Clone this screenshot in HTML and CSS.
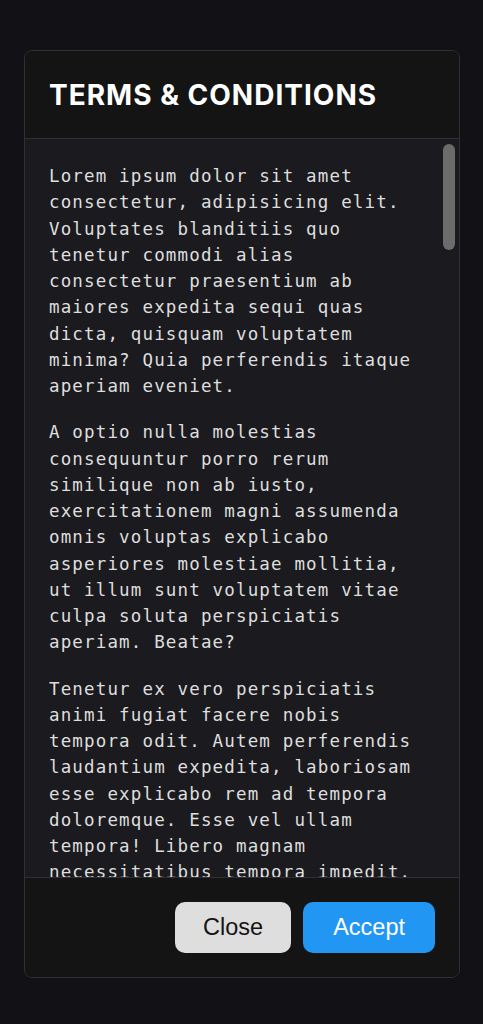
FILE: index.html
```html
<!DOCTYPE html>
<html lang="en">
<head>
<meta charset="utf-8">
<title>Terms &amp; Conditions</title>
<link rel="stylesheet" href="styles.css">
</head>
<body>
<div class="page">
  <section class="dialog">
    <header class="dialog-header">
      <h1 class="dialog-title">TERMS &amp; CONDITIONS</h1>
    </header>
    <div class="dialog-main">
      <div class="dialog-body">
        <p>Lorem ipsum dolor sit amet consectetur, adipisicing elit. Voluptates blanditiis quo tenetur commodi alias consectetur praesentium ab maiores expedita sequi quas dicta, quisquam voluptatem minima? Quia perferendis itaque aperiam eveniet.</p>
        <p>A optio nulla molestias consequuntur porro rerum similique non ab iusto, exercitationem magni assumenda omnis voluptas explicabo asperiores molestiae mollitia, ut illum sunt voluptatem vitae culpa soluta perspiciatis aperiam. Beatae?</p>
        <p>Tenetur ex vero perspiciatis animi fugiat facere nobis tempora odit. Autem perferendis laudantium expedita, laboriosam esse explicabo rem ad tempora doloremque. Esse vel ullam tempora! Libero magnam necessitatibus tempora impedit.</p>
        <p>Lorem ipsum dolor sit amet consectetur, adipisicing elit. Voluptates blanditiis quo tenetur commodi alias consectetur praesentium ab maiores expedita sequi quas dicta, quisquam voluptatem minima? Quia perferendis itaque aperiam eveniet.</p>
        <p>A optio nulla molestias consequuntur porro rerum similique non ab iusto, exercitationem magni assumenda omnis voluptas explicabo asperiores molestiae mollitia, ut illum sunt voluptatem vitae culpa soluta perspiciatis aperiam. Beatae?</p>
        <p>Tenetur ex vero perspiciatis animi fugiat facere nobis tempora odit. Autem perferendis laudantium expedita, laboriosam esse explicabo rem ad tempora doloremque. Esse vel ullam tempora! Libero magnam necessitatibus tempora impedit.</p>
        <p>Lorem ipsum dolor sit amet consectetur, adipisicing elit. Voluptates blanditiis quo tenetur commodi alias consectetur praesentium ab maiores expedita sequi quas dicta, quisquam voluptatem minima? Quia perferendis itaque aperiam eveniet.</p>
        <p>A optio nulla molestias consequuntur porro rerum similique non ab iusto, exercitationem magni assumenda omnis voluptas explicabo asperiores molestiae mollitia, ut illum sunt voluptatem vitae culpa soluta perspiciatis aperiam. Beatae?</p>
        <p>Tenetur ex vero perspiciatis animi fugiat facere nobis tempora odit. Autem perferendis laudantium expedita, laboriosam esse explicabo rem ad tempora doloremque. Esse vel ullam tempora! Libero magnam necessitatibus tempora impedit.</p>
        <p>Lorem ipsum dolor sit amet consectetur, adipisicing elit. Voluptates blanditiis quo tenetur commodi alias consectetur praesentium ab maiores expedita sequi quas dicta, quisquam voluptatem minima? Quia perferendis itaque aperiam eveniet.</p>
        <p>A optio nulla molestias consequuntur porro rerum similique non ab iusto, exercitationem magni assumenda omnis voluptas explicabo asperiores molestiae mollitia, ut illum sunt voluptatem vitae culpa soluta perspiciatis aperiam. Beatae?</p>
        <p>Tenetur ex vero perspiciatis animi fugiat facere nobis tempora odit. Autem perferendis laudantium expedita, laboriosam esse explicabo rem ad tempora doloremque. Esse vel ullam tempora! Libero magnam necessitatibus tempora impedit.</p>
        <p>Lorem ipsum dolor sit amet consectetur, adipisicing elit. Voluptates blanditiis quo tenetur commodi alias consectetur praesentium ab maiores expedita sequi quas dicta, quisquam voluptatem minima? Quia perferendis itaque aperiam eveniet.</p>
        <p>A optio nulla molestias consequuntur porro rerum similique non ab iusto, exercitationem magni assumenda omnis voluptas explicabo asperiores molestiae mollitia, ut illum sunt voluptatem vitae culpa soluta perspiciatis aperiam. Beatae?</p>
        <p>Tenetur ex vero perspiciatis animi fugiat facere nobis tempora odit. Autem perferendis laudantium expedita, laboriosam esse explicabo rem ad tempora doloremque. Esse vel ullam tempora! Libero magnam necessitatibus tempora impedit.</p>
        <p>Lorem ipsum dolor sit amet consectetur, adipisicing elit. Voluptates blanditiis quo tenetur commodi alias consectetur praesentium ab maiores expedita sequi quas dicta, quisquam voluptatem minima? Quia perferendis itaque aperiam eveniet.</p>
        <p>A optio nulla molestias consequuntur porro rerum similique non ab iusto, exercitationem magni assumenda omnis voluptas explicabo asperiores molestiae mollitia, ut illum sunt voluptatem vitae culpa soluta perspiciatis aperiam. Beatae?</p>
        <p>Tenetur ex vero perspiciatis animi fugiat facere nobis tempora odit. Autem perferendis laudantium expedita, laboriosam esse explicabo rem ad tempora doloremque. Esse vel ullam tempora! Libero magnam necessitatibus tempora impedit.</p>
      </div>
      <div class="scroll-thumb" aria-hidden="true"></div>
    </div>
    <footer class="dialog-footer">
      <button class="btn btn-close" type="button">Close</button>
      <button class="btn btn-accept" type="button">Accept</button>
    </footer>
  </section>
</div>
</body>
</html>
```

FILE: styles.css
```css
* {
  box-sizing: border-box;
}

html, body {
  margin: 0;
  padding: 0;
  background: #111116;
}

.page {
  padding: 50px 23px 46px 24px;
}

.dialog {
  display: flex;
  flex-direction: column;
  height: 928px;
  border: 1px solid #303034;
  border-radius: 8px;
  background: #141414;
  overflow: hidden;
}

.dialog-header {
  height: 88px;
  padding: 0 24px;
  display: flex;
  align-items: center;
  border-bottom: 1px solid #303034;
  background: #141414;
  flex: none;
}

.dialog-title {
  margin: 0;
  font-family: Inter, "Liberation Sans", sans-serif;
  font-weight: 700;
  font-size: 28px;
  letter-spacing: 1px;
  line-height: 1;
  color: #ffffff;
}

.dialog-main {
  position: relative;
  flex: 1;
  min-height: 0;
  display: flex;
  background: #1b1b1f;
}

.dialog-body {
  flex: 1;
  min-height: 0;
  overflow-y: auto;
  scrollbar-width: none;
  padding: 24px 44px 24px 24px;
  font-family: "DejaVu Sans Mono", "Liberation Mono", monospace;
  font-size: 17.5px;
  letter-spacing: 1.15px;
  line-height: 26.25px;
  color: #dedede;
}

.dialog-body p {
  margin: 0 0 20px;
}

.dialog-body p:last-child {
  margin-bottom: 0;
}

.scroll-thumb {
  position: absolute;
  top: 5px;
  right: 4px;
  width: 12px;
  height: 106px;
  border-radius: 6px;
  background: #6b6b6b;
}

.dialog-footer {
  flex: none;
  display: flex;
  justify-content: flex-end;
  gap: 12px;
  padding: 24px;
  border-top: 1px solid #303034;
  background: #141414;
}

.btn {
  height: 51px;
  padding: 0 28px;
  border: none;
  border-radius: 10px;
  font-family: "Liberation Sans", Arial, sans-serif;
  font-size: 23.5px;
  cursor: pointer;
}

.btn-close {
  background: #dedede;
  color: #141414;
}

.btn-accept {
  padding: 0 30px;
  background: #2196f3;
  color: #ffffff;
}
```
